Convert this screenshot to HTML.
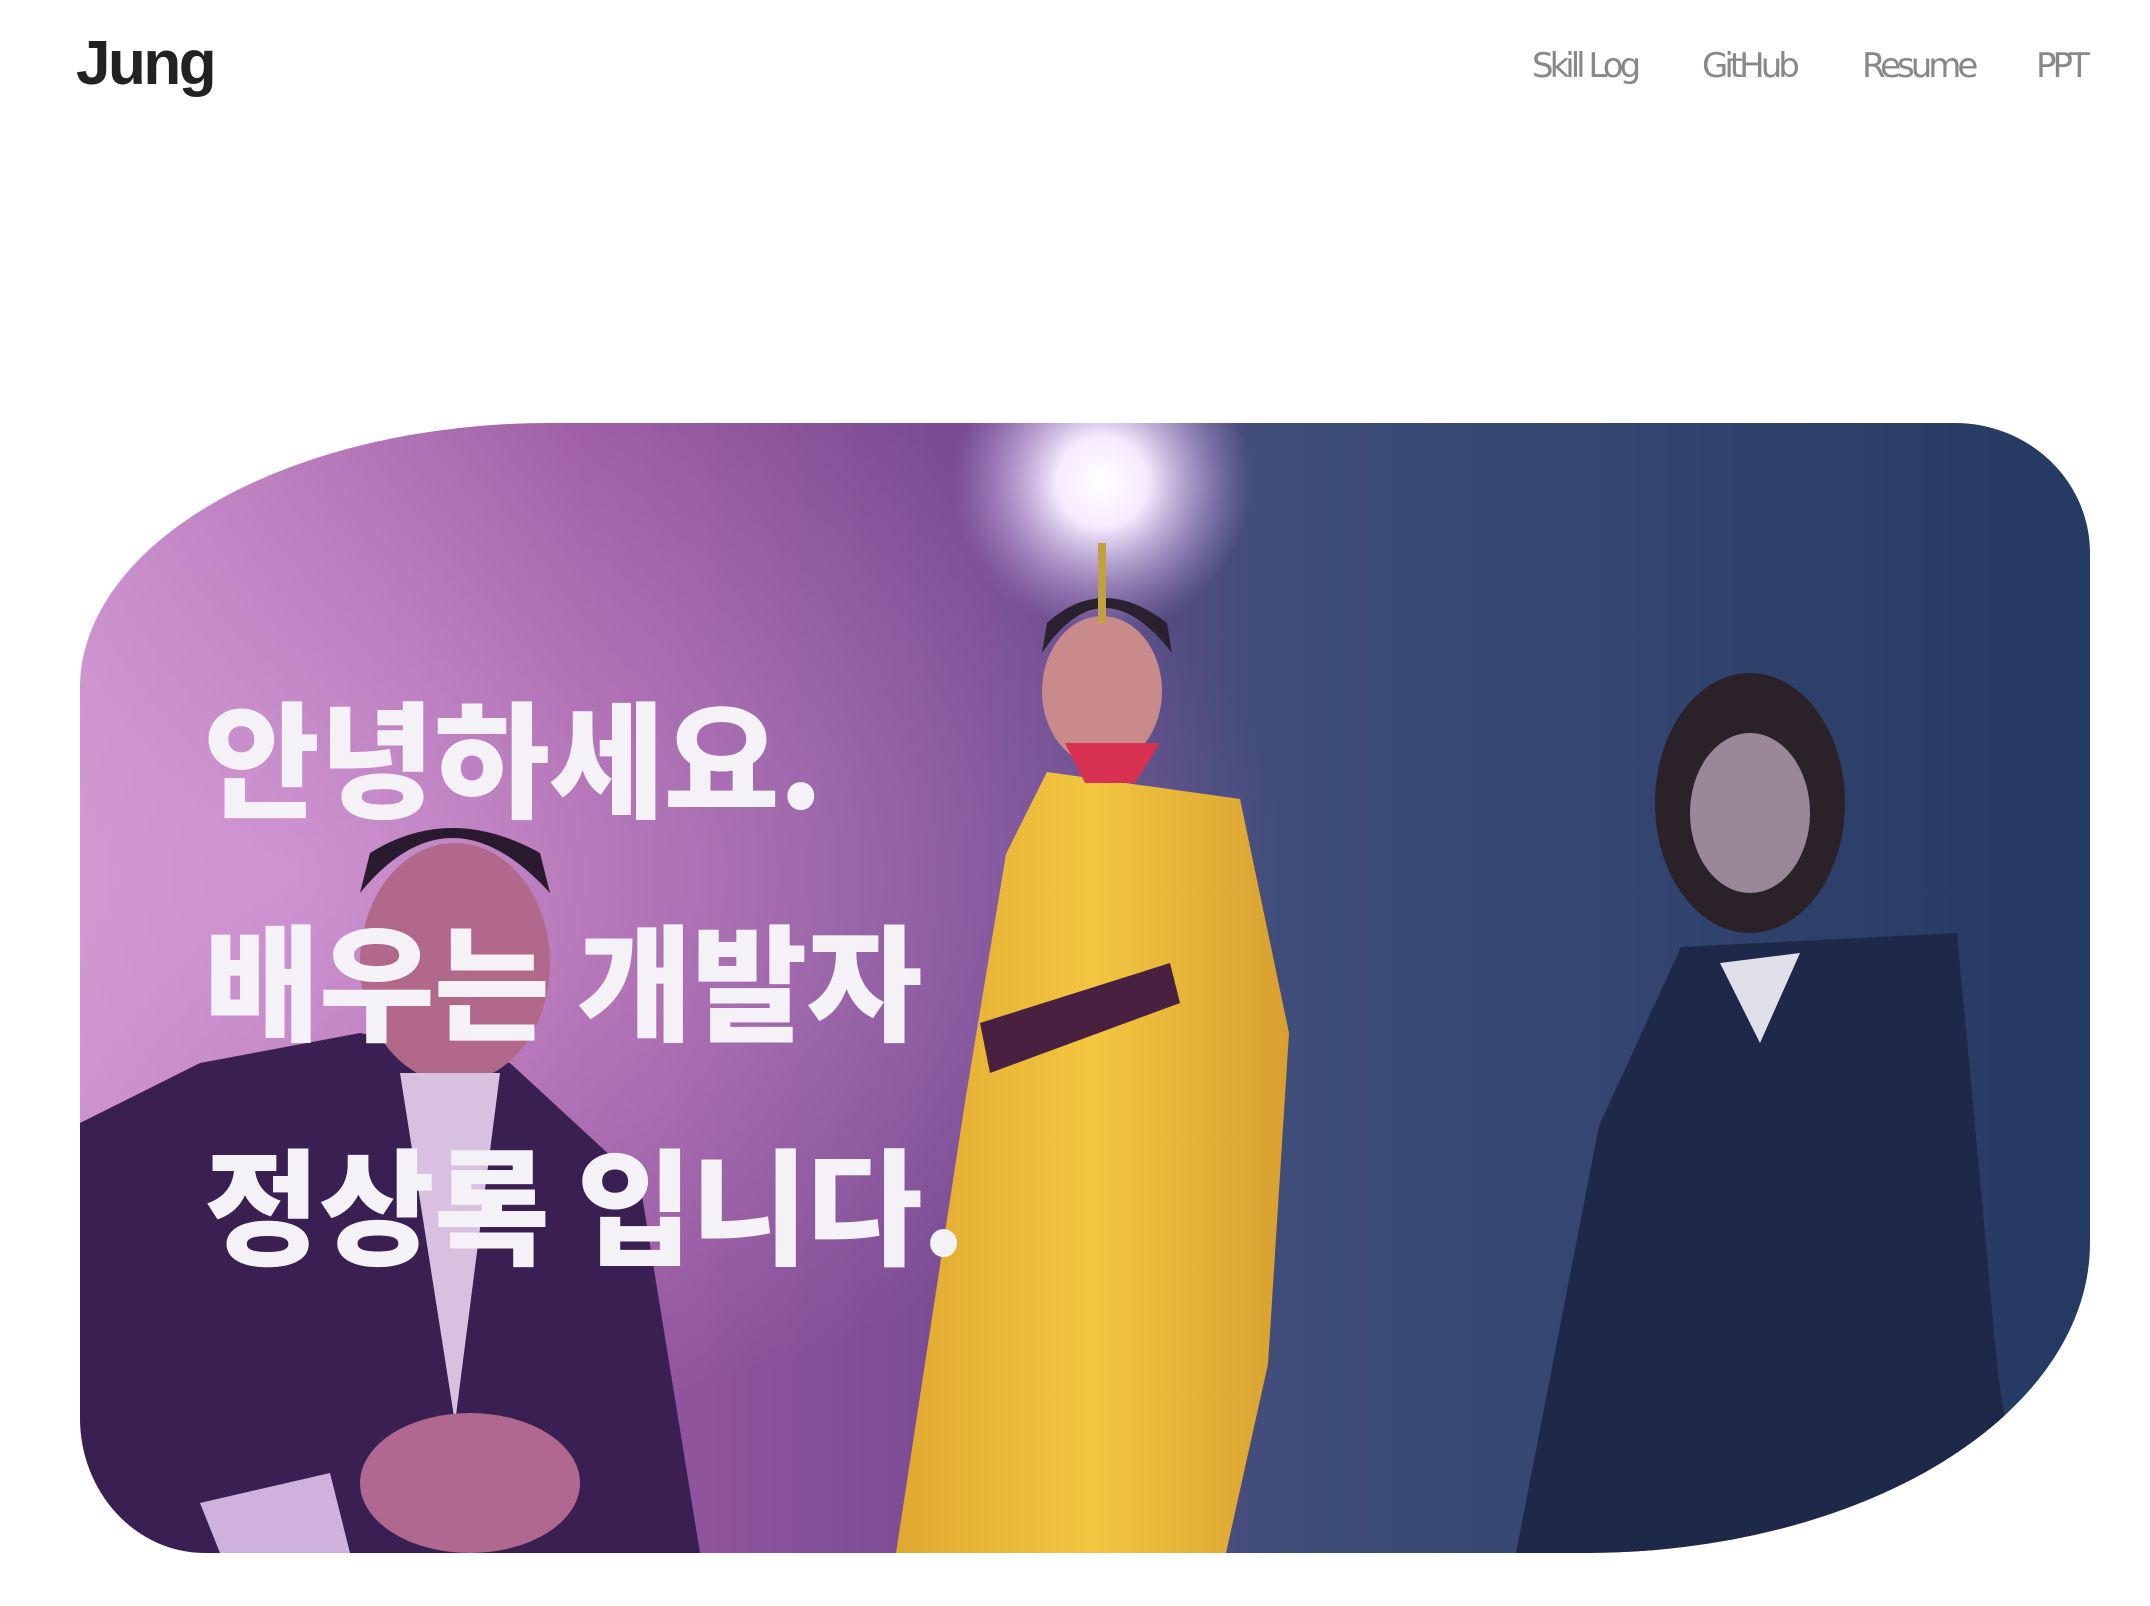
<!DOCTYPE html>
<html><head><meta charset="utf-8"><style>
body{margin:0;width:2150px;height:1606px;background:#fff;position:relative;overflow:hidden;font-family:"Liberation Sans","Noto Sans CJK KR",sans-serif}
.logo{position:absolute;left:76px;top:28px;font-size:62px;color:#222;letter-spacing:-2.5px;font-family:"Liberation Sans",sans-serif;font-weight:700}
.nav{position:absolute;top:46px;font-size:34px;color:#888;letter-spacing:-4px;font-family:"DejaVu Sans","Liberation Sans",sans-serif;}
.hero{position:absolute;left:80px;top:423px;width:2010px;height:1130px;overflow:hidden;border-radius:470px 135px 505px 125px / 265px 130px 310px 135px;}
.t{position:absolute;left:124px;color:#f4f2f6;font-family:"Noto Sans CJK KR",sans-serif;font-weight:900;font-size:126px;letter-spacing:-1px;line-height:1;white-space:nowrap}
</style></head><body>
<div class="logo">Jung</div>
<div class="nav" style="left:1532px">Skill Log</div>
<div class="nav" style="left:1702px">GitHub</div>
<div class="nav" style="left:1862px">Resume</div>
<div class="nav" style="left:2036px">PPT</div>
<div class="hero">
<svg width="2010" height="1130" viewBox="0 0 2010 1130">
<defs>
<linearGradient id="bg" x1="0" x2="1" y1="0" y2="0">
<stop offset="0" stop-color="#c488c8"/><stop offset="0.25" stop-color="#9a58a0"/><stop offset="0.45" stop-color="#764a92"/><stop offset="0.6" stop-color="#3e4d7a"/><stop offset="1" stop-color="#243a62"/></linearGradient>
<radialGradient id="lt"><stop offset="0" stop-color="#fff"/><stop offset="0.3" stop-color="#f6eaff"/><stop offset="1" stop-color="#c0a0e0" stop-opacity="0"/></radialGradient>
<radialGradient id="pk" cx="0.1" cy="0.4" r="0.5"><stop offset="0" stop-color="#e0a8e0" stop-opacity="0.6"/><stop offset="1" stop-color="#e0a8e0" stop-opacity="0"/></radialGradient>
<linearGradient id="rb" x1="0" x2="1"><stop offset="0" stop-color="#e0a830"/><stop offset="0.5" stop-color="#f2c640"/><stop offset="1" stop-color="#d8a030"/></linearGradient>
</defs>
<rect width="2010" height="1130" fill="url(#bg)"/>
<rect width="2010" height="1130" fill="url(#pk)"/>
<circle cx="1022" cy="59" r="150" fill="url(#lt)"/>
<path d="M0 700 L120 640 L280 610 L430 640 L560 760 L620 1130 L0 1130Z" fill="#3a2052"/>
<ellipse cx="375" cy="540" rx="95" ry="120" fill="#b2688a"/>
<path d="M280 470 Q370 360 470 470 L460 430 Q370 380 290 430Z" fill="#2a1a30"/>
<path d="M320 650 L375 1000 L420 650Z" fill="#d8c0e0"/>
<ellipse cx="390" cy="1060" rx="110" ry="70" fill="#b06890"/>
<path d="M120 1080 L250 1050 L270 1130 L140 1130Z" fill="#d0b0dc"/>
<path d="M926 431 L967 349 L1160 376 L1209 610 L1188 941 L1146 1130 L816 1130 L885 679Z" fill="url(#rb)"/>
<path d="M900 600 L1090 540 L1100 580 L910 650Z" fill="#4a2040"/>
<ellipse cx="1022" cy="268" rx="60" ry="75" fill="#c88a8a"/>
<path d="M962 230 Q1022 140 1092 230 L1087 200 Q1022 150 967 200Z" fill="#2a2030"/>
<rect x="1018" y="120" width="8" height="80" fill="#c0a040"/>
<path d="M985 320 L1080 320 L1055 360 L1005 360Z" fill="#d83050"/>
<path d="M1519 703 L1601 524 L1877 510 L1918 951 L1946 1130 L1436 1130Z" fill="#1e2848"/>
<ellipse cx="1670" cy="380" rx="95" ry="130" fill="#2a2228"/>
<ellipse cx="1670" cy="390" rx="60" ry="80" fill="#9a8898"/>
<path d="M1640 540 L1680 620 L1720 530Z" fill="#e0e0ea"/>
</svg>
<div class="t" style="top:268px">안녕하세요.</div>
<div class="t" style="top:491px">배우는 개발자</div>
<div class="t" style="top:715px">정상록 입니다.</div>
</div>
</body></html>
